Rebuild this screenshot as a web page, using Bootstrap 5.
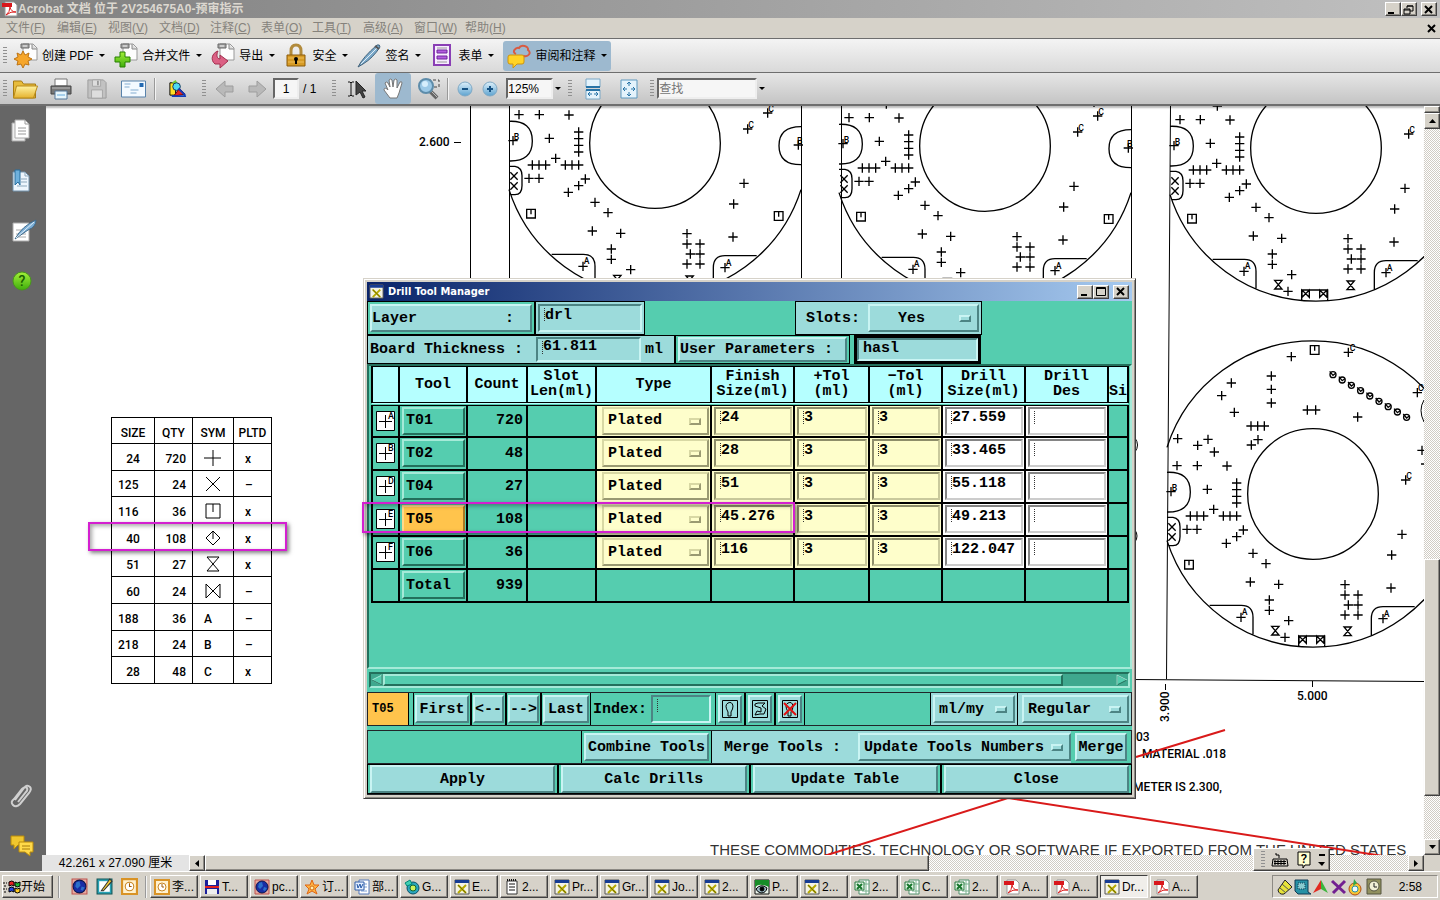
<!DOCTYPE html>
<html lang="zh-CN">
<head>
    <meta charset="UTF-8">
    <meta name="viewport" content="width=device-width, initial-scale=1.0">
    <title>Acrobat 文档 位于 2V254675A0-预审指示</title>
    <link href="https://cdn.jsdelivr.net/npm/bootstrap@5.3.3/dist/css/bootstrap.min.css" rel="stylesheet">
    <style>
        body {
            font-family: "Liberation Sans", "Noto Sans CJK SC", sans-serif;
            font-size: 12px;
            line-height: 16px;
            color: #000;
            background: #d6d2c9;
        }
        button, select, input { font: inherit; color: inherit; border-radius: 0; }
        button { padding: 0; border: 0; background: none; white-space: nowrap; }
        svg { display: block; flex: none; }
        svg text { font-family: Roboto, "Liberation Sans", sans-serif; font-weight: 500; }

        /* Windows chrome */
        .raised {
            background: #d6d2c9;
            border: 1px solid;
            border-color: #fff #404040 #404040 #fff;
            box-shadow: inset -1px -1px #8d8a84;
        }
        .app-title {
            height: 18px;
            padding: 0 3px 0 2px;
            background: linear-gradient(90deg, #808080, #c0c0c0);
            color: #dcd8d0;
            font-weight: bold;
        }
        .win-btn { width: 16px; height: 14px; }
        .app-menu { height: 20px; padding-left: 6px; color: #85827c; background: #d6d2c9; }
        .app-menu a { color: inherit; text-decoration: none; width: 51px; }
        .tools-top {
            height: 34px;
            border-top: 1px solid #6e6e6e;
            background: linear-gradient(#f4f4f4, #d9d9d9);
        }
        .tools-bottom {
            height: 34px;
            border-top: 1px solid #6e6e6e;
            border-bottom: 2px solid #6e6e6e;
            background: linear-gradient(#e6e6e6, #c4c4c4);
        }
        .tool-btn { margin-right: 9px; gap: 4px; height: 30px; }
        .tool-btn.on, .pic-btn.on { background: #9db9cf; border-radius: 3px; }
        .tool-btn.on { padding: 0 4px; }
        .pic-btn { width: 36px; height: 31px; display: flex; align-items: center; justify-content: center; }
        .pic-btn.slim { width: 32px; }
        .pic-btn.tiny { width: 25px; }
        .caret-dn { border: 3px solid transparent; border-top-color: #000; border-bottom: 0; width: 6px; margin-left: 2px; }
        .grip {
            width: 4px; height: 19px; margin: 0 3px;
            background: radial-gradient(circle, #909090 1px, transparent 1px) 0 0 / 2px 3px;
        }
        .v-line { width: 2px; height: 22px; margin: 0 3px; border-left: 1px solid #999; border-right: 1px solid #f3f3f3; }
        .sunk { background: #f6f6f6; border: 2px solid; border-color: #666 #eee #eee #666; height: 21px; padding: 0; }
        .side-bar { width: 46px; background: #666; }
        .side-bar button { height: 50px; width: 44px; display: flex; align-items: center; justify-content: center; }
        .doc-view { background: #fff; box-shadow: inset 0 3px 2px -1px #bbb; min-width: 0; }
        .scroll-track { background: repeating-conic-gradient(#fff 0 25%, #d0ccc4 0 50%) 0 0 / 2px 2px; }
        .scroll-v { width: 16px; }
        .scroll-h { height: 16px; }
        .sq { width: 16px; height: 16px; display: flex; align-items: center; justify-content: center; flex: none; }

        /* Drill legend on the sheet */
        .legend-table {
            position: absolute; left: 65px; top: 311px; width: 161px; height: 267px;
            border-collapse: collapse; table-layout: fixed;
            font-family: Roboto, "Liberation Sans", sans-serif;
            font-size: 12px; font-weight: 500; line-height: 14px;
        }
        .legend-table th, .legend-table td { border: 1px solid #000; padding: 4px 6px 0; height: 26px; }
        .legend-table th { padding: 4px 0 0; text-align: center; font-weight: 500; }
        .legend-table td:nth-child(2) { text-align: right; }
        .legend-table td:nth-child(3) { padding-left: 11px; }
        .legend-table td:nth-child(4) { padding-left: 11px; }
        .legend-table svg { margin: -4px 0 -2px; }
        .mark-box { position: absolute; border: 2px solid #d41fd0; box-shadow: 2px 2px 4px rgba(0, 0, 0, .5), inset 2px 2px 4px rgba(0, 0, 0, .35); pointer-events: none; }
        .mark-sheet { left: 42px; top: 416px; width: 199px; height: 29px; }
        .mark-row { left: -2px; top: 223px; width: 433px; height: 31px; }

        /* Drill Tool Manager */
        .drill-win {
            position: absolute; left: 363px; top: 278px; width: 773px;
            background: #d6d2c9; border: 1px solid; border-color: #d6d2c9 #404040 #404040 #d6d2c9;
            box-shadow: inset 1px 1px #fff, inset -1px -1px #8d8a84;
            padding: 3px;
        }
        .drill-title { height: 19px; padding: 0 3px 0 2px; background: linear-gradient(90deg, #0a246a, #a6caf0); color: #fff; font-size: 11px; font-weight: bold; font-family: "DejaVu Sans Condensed", "Liberation Sans", sans-serif; }
        .drill-body, .drill-body button, .drill-body select, .drill-body input {
            font-family: "Liberation Mono", "DejaVu Sans Mono", monospace;
            font-size: 15px; line-height: 15px; font-weight: bold;
        }
        .drill-body { background: #55cdaf; white-space: nowrap; }
        .m-box { border: 1px solid #000; padding: 2px; display: flex; align-items: center; }
        .m-box.snug { padding: 2px 1px; }
        .blue { background: #9cdbdb; }
        .m-btn { border: 2px solid; border-color: #c9f4f3 #4c8484 #4c8484 #c9f4f3; background: #9cdbdb; height: 28px; }
        .m-btn.green { background: #55cdaf; border-color: #a5ead8 #23705c #23705c #a5ead8; }
        .m-btn.hot { background: #ffc44c; border-color: #ffd98b #a87a24 #a87a24 #ffd98b; }
        .m-input {
            border: 2px solid; border-color: #4c8484 #c9f4f3 #c9f4f3 #4c8484; height: 28px; width: 100%;
            padding: 0 0 6px 5px; display: block; min-width: 0;
            background: repeating-linear-gradient(#333 0 1px, transparent 1px 2px) 4px 2px / 1px 14px no-repeat #9cdbdb;
        }
        .m-pick { position: relative; }
        .m-pick select { appearance: none; width: 100%; height: 28px; padding: 0 0 0 4px; border: 2px solid; border-color: #c9f4f3 #4c8484 #4c8484 #c9f4f3; background: #9cdbdb; }
        .m-pick::after {
            content: ""; position: absolute; right: 8px; top: 11px; width: 12px; height: 7px;
            border: 2px solid; border-color: #c9f4f3 #4c8484 #4c8484 #c9f4f3; pointer-events: none;
        }
        .yellow .m-pick select, .yellow .m-pick::after { background: #fefecb; border-color: #d8d8a4 #9a9a72 #9a9a72 #d8d8a4; }
        .m-pick.yes-pick select { padding-left: 28px; }
        .yellow .m-input { background-color: #fefecb; border-color: #8e8e6a #c9c99c #c9c99c #8e8e6a; }
        .white .m-input { background-color: #fff; border-color: #858585 #ccc #ccc #858585; }
        .grid-frame { border: 2px solid; border-color: #23705c #a5ead8 #a5ead8 #23705c; padding: 0 1px 0 2px; height: 305px; overflow: hidden; }
        .drill-grid { width: 100%; table-layout: fixed; border-collapse: collapse; }
        .drill-grid th { background: #b5ffff; border: 2px solid #000; border-top-width: 1px; border-bottom: 4px double #000; height: 37px; padding: 0; text-align: center; }
        .drill-grid td { border: 2px solid #000; height: 33px; padding: 1px 1px 1px 2px; overflow: hidden; }
        .drill-grid td.num { text-align: right; padding-right: 3px; }
        .drill-grid .m-btn { width: 100%; text-align: left; padding-left: 2px; }
        .drill-grid .yellow { background: #fefecb; }
        .drill-grid .pick-cell { padding-left: 5px; }
        .drill-grid .white { background: #fff; }
        .drill-grid .sym-cell { padding: 0 0 0 3px; }
        .m-scroll { height: 16px; margin: 3px 2px 0; background: #3fa88e; border: 2px solid; border-color: #23705c #a5ead8 #a5ead8 #23705c; }
        .m-thumb { width: 680px; height: 12px; background: #55cdaf; border: 2px solid; border-color: #a5ead8 #23705c #23705c #a5ead8; }

        /* Task bar */
        .task-bar { height: 29px; background: #d6d2c9; border-top: 1px solid #fff; padding: 3px 2px 2px; }
        .task-btn { width: 48px; height: 23px; margin-right: 2px; gap: 2px; padding-left: 3px; display: flex; align-items: center; overflow: hidden; flex: none; }
        .task-btn.on { border-color: #404040 #fff #fff #404040; background: #f0eeea; box-shadow: none; }
        .start-btn { width: 51px; }
        .tray { border: 1px solid; border-color: #8d8a84 #fff #fff #8d8a84; height: 23px; width: 166px; padding: 0 15px 0 3px; }
        .lang-bar { position: absolute; right: 110px; bottom: 29px; width: 77px; height: 23px; z-index: 3; }
    </style>
</head>
<body class="vh-100 d-flex flex-column overflow-hidden position-relative">

    <!-- Shared icons -->
    <svg width="0" height="0" class="position-absolute">
        <defs>
            <linearGradient id="gold" x2="0" y2="1"><stop stop-color="#fff3a0"/><stop offset="1" stop-color="#e5b22e"/></linearGradient>
            <linearGradient id="sky" x2="0" y2="1"><stop stop-color="#dff1fb"/><stop offset="1" stop-color="#5ca2cf"/></linearGradient>
            <linearGradient id="lime" x2="0" y2="1"><stop stop-color="#a3ef3a"/><stop offset="1" stop-color="#3fae0c"/></linearGradient>
            <g id="sheet"><path d="M9 1h10l4 4v12H9z" fill="#fdfdfd" stroke="#999"/><path d="M7 1h8v4H7z" fill="#aaa" stroke="#666"/><path d="M9 3h4" stroke="#eee"/><path d="M18 1v5h5" fill="#ddd" stroke="#888"/></g>
            <symbol id="i-create" viewBox="0 0 24 26"><use href="#sheet"/><path d="M9 8l2 4 4-2-1 4 4 2-4 2 1 4-4-1-2 4-2-4-4 1 1-4-4-2 4-2-1-4 4 2z" fill="#f6a62b" stroke="#bd7415"/></symbol>
            <symbol id="i-merge" viewBox="0 0 24 26"><use href="#sheet"/><path d="M6 9h5v5h5v5h-5v5H6v-5H1v-5h5z" fill="url(#lime)" stroke="#278000"/></symbol>
            <symbol id="i-export" viewBox="0 0 24 26"><use href="#sheet"/><path d="M7 8c-6 2-8 9-3 13h5v4l8-7-8-6v4c-3 0-4-4-2-8z" fill="#db6084" stroke="#a2304f"/></symbol>
            <symbol id="i-lock" viewBox="0 0 24 26"><path d="M7 13V8q0-6 5-6t5 6v5" fill="none" stroke="#b28b3c" stroke-width="3"/><path d="M3 12h18v11H3z" fill="#d79b25" stroke="#8b5b0b"/><path d="M4 15h16M4 19h16" stroke="#eebd58"/><circle cx="12" cy="16" r="2"/><path d="M12 16v5" stroke="#000" stroke-width="2"/></symbol>
            <symbol id="i-pen" viewBox="0 0 24 26"><path d="M1 24Q6 14 20 2q3-1 3 2Q16 15 6 21z" fill="#7ba9ca" stroke="#42627a"/><path d="M4 21L20 5" stroke="#e2eef6"/><path d="M18 3l4 3" stroke="#555" stroke-width="2"/></symbol>
            <symbol id="i-form" viewBox="0 0 24 26"><path d="M4 2h16v20H4z" fill="#f7ecff" stroke="#8a3fb5" stroke-width="2"/><path d="M7 7h10v3H7zm0 6h10v3H7z" fill="#b45ce0" stroke="#6e269a"/><path d="M7 5h10M7 19h10" stroke="#999"/></symbol>
            <symbol id="i-review" viewBox="0 0 24 26"><path d="M9 11c-5-2 0-7 3-6 2-4 10-2 9 2 4 3 0 7-4 6l-3 4" fill="none" stroke="#d95a41" stroke-width="2"/><path d="M3 12h12q2 0 2 2v5q0 2-2 2h-5l-4 4v-4H3q-2 0-2-2v-5q0-2 2-2z" fill="#ffd326" stroke="#cf940d"/></symbol>
            <symbol id="i-folder" viewBox="0 0 26 22"><path d="M1 20V3h8l2 3h12v14z" fill="#e7bc3c" stroke="#a67b13"/><path d="M4 8h21l-4 12H1z" fill="url(#gold)" stroke="#b98a1a"/></symbol>
            <symbol id="i-print" viewBox="0 0 24 22"><path d="M6 1h12v7H6z" fill="#fff" stroke="#777"/><path d="M2 8h20v8H2z" fill="#777" stroke="#444"/><path d="M3 10h18" stroke="#bbb"/><path d="M6 13h12v8H6z" fill="#e7f5fb" stroke="#579"/><path d="M8 17h8" stroke="#6ad"/></symbol>
            <symbol id="i-save" viewBox="0 0 22 22"><path d="M1 1h17l3 3v17H1z" fill="#c2c2c2" stroke="#999"/><path d="M6 1h9v7H6zM5 12h12v9H5z" fill="#ddd" stroke="#a5a5a5"/><path d="M12 2v5" stroke="#999" stroke-width="2"/></symbol>
            <symbol id="i-mail" viewBox="0 0 26 20"><path d="M1 2h24v16H1z" fill="#f4faff" stroke="#5882ab"/><path d="M19 4h4v4h-4z" fill="#246ab2"/><path d="M4 5h6M4 8h5M10 11h8M10 14h6" stroke="#83acd0"/></symbol>
            <symbol id="i-shapes" viewBox="0 0 20 20"><path d="M2 4h6v13H2z" fill="#ffdf25" stroke="#000"/><path d="M4 4l4-3 3 5" fill="#7c3"/><circle cx="9" cy="8" r="4" fill="#50d9f0" stroke="#135"/><path d="M6 18l6-8 6 6z" fill="#e52320" stroke="#600"/><path d="M11 10l7 7M4 18h15" stroke="#123dba" stroke-width="2"/></symbol>
            <symbol id="i-left" viewBox="0 0 20 20"><path d="M1 10l9-8v5h8v6h-8v5z" fill="#b9b9b9" stroke="#9d9d9d"/></symbol>
            <symbol id="i-right" viewBox="0 0 20 20"><path d="M19 10l-9-8v5H2v6h8v5z" fill="#b9b9b9" stroke="#9d9d9d"/></symbol>
            <symbol id="i-select" viewBox="0 0 20 20"><path d="M1 3h2l1 1 1-1h2M4 4v12M1 17h2l1-1 1 1h2" fill="none" stroke="#111"/><path d="M9 2v14l4-3 3 6 2-1-3-6h4z" fill="#444" stroke="#222"/></symbol>
            <symbol id="i-hand" viewBox="0 0 22 22"><path d="M8 20l-6-8q0-3 3-1l1 1-3-7q1-2 3 0l2 4-1-7q2-2 3 0l1 7 1-7q2-2 3 0v8l3-6q2-1 2 1l-3 10-2 5z" fill="#fff" stroke="#777"/></symbol>
            <symbol id="i-zoom" viewBox="0 0 24 24"><path d="M11 3h11v7H11z" fill="none" stroke="#444" stroke-dasharray="3 2"/><path d="M13 14l7 7" stroke="#666" stroke-width="4"/><path d="M14 14l6 6" stroke="#bbb"/><circle cx="9" cy="9" r="7" fill="#9cc9e7" stroke="#5d8caa" stroke-width="2"/><circle cx="8" cy="7" r="3" fill="#d6eefc"/></symbol>
            <symbol id="i-minus" viewBox="0 0 16 16"><circle cx="8" cy="8" r="7" fill="url(#sky)" stroke="#7fa9c5"/><path d="M5 8h6" stroke="#175384" stroke-width="2"/></symbol>
            <symbol id="i-plus" viewBox="0 0 16 16"><circle cx="8" cy="8" r="7" fill="url(#sky)" stroke="#7fa9c5"/><path d="M5 8h6M8 5v6" stroke="#175384" stroke-width="2"/></symbol>
            <symbol id="i-fitw" viewBox="0 0 18 22"><path d="M2 1h14v8H2zM2 12h14v9H2z" fill="#e4f3fc" stroke="#7ba8c6"/><path d="M2 9h14M2 12h14" stroke="#2874a7" stroke-width="2"/><path d="M4 16h4m2 0h4M6 14l-2 2 2 2m6-4l2 2-2 2" fill="none" stroke="#2874a7"/></symbol>
            <symbol id="i-fitp" viewBox="0 0 18 22"><path d="M1 2h16v18H1z" fill="#e4f3fc" stroke="#5f99bf"/><path d="M9 4v4m0 6v4M3 11h4m4 0h4M7 6l2-2 2 2M7 16l2 2 2-2M5 9l-2 2 2 2m8-4l2 2-2 2" fill="none" stroke="#2874a7"/></symbol>
            <symbol id="s-pages" viewBox="0 0 22 24"><path d="M1 4h13v18H1z" fill="#eee" stroke="#aaa"/><path d="M4 1h10l4 4v14H4z" fill="#fff" stroke="#aaa"/><path d="M14 1v4h4M7 9h8M7 12h8M7 15h8" fill="none" stroke="#999"/></symbol>
            <symbol id="s-marks" viewBox="0 0 22 24"><path d="M2 3h12l4 4v15H2z" fill="#eef6fd" stroke="#7393ad"/><path d="M14 3v4h4M10 10h6M10 13h6M6 17h10" fill="none" stroke="#8ba7bb"/><path d="M4 1h5v15l-2-3-3 3z" fill="#6eb0dc" stroke="#286e9e"/></symbol>
            <symbol id="s-sign" viewBox="0 0 26 24"><path d="M2 4h16v18H2z" fill="#fff" stroke="#aaa"/><path d="M5 11h8M5 15h10M5 18h10" stroke="#aaa"/><path d="M4 20Q11 7 25 1q0 7-8 10z" fill="#7dafd6" stroke="#406b8c"/><path d="M5 19L23 3" stroke="#e2f0fa"/></symbol>
            <symbol id="s-clip" viewBox="0 0 24 26"><path d="M5 17L14 5q3-4 6-1 2 2-1 6l-9 11q-4 4-7 1t1-6l8-10q3-3 5-1 1 2-1 4l-8 10" fill="none" stroke="#d0d0d0" stroke-width="2"/></symbol>
            <symbol id="s-notes" viewBox="0 0 26 24"><path d="M2 2h13v9H9l-4 4v-4H2z" fill="#f0c62e" stroke="#b88a0a"/><path d="M10 8h14v10h-3v4l-5-4h-6z" fill="#ffd94a" stroke="#b88a0a"/><path d="M13 12h8M13 15h8" stroke="#a57b0a"/></symbol>
            <symbol id="t-x" viewBox="0 0 16 16"><path d="M1 1h14v14H1z" fill="#f4f3e5" stroke="#555"/><path d="M1 1h14v3H1z" fill="#173c93"/><path d="M4 6l8 8M12 6l-8 8" stroke="#b5a900" stroke-width="2"/><path d="M4 6l8 8" stroke="#777000"/></symbol>
            <symbol id="t-globe" viewBox="0 0 16 16"><path d="M1 1h14v14H1z" fill="#e9aaa0" stroke="#bd5550"/><circle cx="8" cy="8" r="6" fill="#182da5" stroke="#0b164d"/><path d="M5 4l3-1 1 4-3 3-2-2zM10 8l3 1-2 3-2-1z" fill="#2b6fc9"/></symbol>
            <symbol id="t-edit" viewBox="0 0 16 16"><path d="M1 1h14v14H1z" fill="#27a2b5" stroke="#155"/><path d="M3 3h10v10H3z" fill="#fff"/><path d="M5 12l8-11 2 2-8 9z" fill="#f5cc35" stroke="#333"/></symbol>
            <symbol id="t-clock" viewBox="0 0 16 16"><path d="M1 1h14v14H1z" fill="#fff1cf" stroke="#d99326" stroke-width="2"/><circle cx="8" cy="8" r="4" fill="#fff" stroke="#c98624"/><path d="M8 5v3h2" fill="none" stroke="#a05d0a"/></symbol>
            <symbol id="t-disk" viewBox="0 0 16 16"><path d="M1 1h14v14H1z" fill="#1b1f9b"/><path d="M4 1h8v5H4z" fill="#fff"/><path d="M1 7h14v2H1z" fill="#e02020"/><path d="M3 10h10v5H3z" fill="#eee"/></symbol>
            <symbol id="t-star" viewBox="0 0 16 16"><path d="M8 1l2 5h5l-4 4 2 5-5-3-5 3 2-5-4-4h5z" fill="#ffb443" stroke="#e06612"/><circle cx="8" cy="9" r="2" fill="#fff0b0" stroke="#d66914"/></symbol>
            <symbol id="t-word" viewBox="0 0 16 16"><path d="M5 1h10v14H5z" fill="#fff" stroke="#5479ba"/><path d="M10 5h3M10 8h3M7 12h6" stroke="#7da0d5"/><path d="M1 3h9v8H1z" fill="#e5efff" stroke="#315ea9"/><path d="M3 5l1 4 2-4 1 4 2-4" fill="none" stroke="#2155a5"/></symbol>
            <symbol id="t-cam" viewBox="0 0 16 16"><circle cx="9" cy="9" r="6" fill="#29a6bd" stroke="#094f66"/><circle cx="9" cy="9" r="3" fill="#cff25b" stroke="#163"/><path d="M1 4l5-3 2 4-5 2z" fill="#3fd0b3" stroke="#087"/></symbol>
            <symbol id="t-note" viewBox="0 0 16 16"><path d="M3 2h10v13H3z" fill="#fff" stroke="#333"/><path d="M5 5h6M5 8h6M5 11h6" stroke="#111"/><path d="M3 1h10" stroke="#111" stroke-width="2" stroke-dasharray="1 1"/></symbol>
            <symbol id="t-eye" viewBox="0 0 16 16"><path d="M1 1h14v14H1z" fill="#e9f3ea" stroke="#111"/><path d="M1 9Q4 3 15 8V1H1z" fill="#188d28"/><path d="M2 10q5-6 11-1-1 5-6 5-4-1-5-4z" fill="#9cb9c4" stroke="#000"/><circle cx="8" cy="10" r="2" stroke="#000"/></symbol>
            <symbol id="t-excel" viewBox="0 0 16 16"><path d="M5 1h10v14H5z" fill="#fff" stroke="#50906d"/><path d="M10 5h5M8 12h7M12 1v14" stroke="#78b38f"/><path d="M1 3h9v8H1z" fill="#e3f5e7" stroke="#267b3e"/><path d="M3 5l5 5M8 5l-5 5" stroke="#16752b" stroke-width="2"/></symbol>
            <symbol id="t-pdf" viewBox="0 0 16 16"><path d="M3 1h9l3 3v11H3z" fill="#fff" stroke="#999"/><path d="M0 2h10v4H0z" fill="#d8171c"/><path d="M4 14q4-3 4-8 1 5 6 5-5-1-10 3z" fill="none" stroke="#dc2020"/></symbol>
            <symbol id="t-flag" viewBox="0 0 18 16"><path d="M6 3q3-2 5 0v4q-2-2-5 0z" fill="#e22" stroke="#000"/><path d="M12 3q2 2 5 0v4q-3 2-5 0z" fill="#2b3" stroke="#000"/><path d="M6 9q3-2 5 0v4q-2-2-5 0z" fill="#24d" stroke="#000"/><path d="M12 9q2 2 5 0v4q-3 2-5 0z" fill="#fc2" stroke="#000"/><path d="M0 4h4M1 7h3M0 10h4M1 13h3" stroke="#000" stroke-dasharray="2 1"/></symbol>
        </defs>
    </svg>

    <header>
        <div class="app-title d-flex align-items-center">
            <svg width="16" height="16"><use href="#t-pdf"/></svg>
            <span class="me-auto">Acrobat 文档 位于 2V254675A0-预审指示</span>
            <button class="win-btn raised" aria-label="最小化"><svg width="12" height="11"><path d="M2 9h6" stroke="#000" stroke-width="2"/></svg></button>
            <button class="win-btn raised" aria-label="还原"><svg width="12" height="11"><path d="M5 4V2h6v5H8M2 5h6v5H2zM2 6h6M5 2h6" fill="none" stroke="#000"/></svg></button>
            <button class="win-btn raised ms-1" aria-label="关闭"><svg width="12" height="11"><path d="M3 2l7 7M10 2L3 9" stroke="#000" stroke-width="2"/></svg></button>
        </div>
        <nav class="app-menu d-flex align-items-center" id="app-menu"></nav>
        <div class="tools-top d-flex align-items-center" id="tools-top">
            <span class="grip"></span>
        </div>
        <div class="tools-bottom d-flex align-items-center">
            <span class="grip me-0"></span>
            <button class="pic-btn" aria-label="打开"><svg width="27" height="22"><use href="#i-folder"/></svg></button>
            <button class="pic-btn" aria-label="打印"><svg width="24" height="22"><use href="#i-print"/></svg></button>
            <button class="pic-btn" aria-label="保存"><svg width="22" height="20"><use href="#i-save"/></svg></button>
            <button class="pic-btn" aria-label="电子邮件"><svg width="27" height="20"><use href="#i-mail"/></svg></button>
            <span class="v-line"></span>
            <button class="pic-btn me-1" aria-label="图形"><svg width="19" height="19"><use href="#i-shapes"/></svg></button>
            <span class="grip"></span>
            <button class="pic-btn slim" aria-label="上一页"><svg width="20" height="20"><use href="#i-left"/></svg></button>
            <button class="pic-btn slim" aria-label="下一页"><svg width="20" height="20"><use href="#i-right"/></svg></button>
            <input class="sunk text-center" style="width: 26px" value="1" aria-label="页码">
            <span class="ms-1 me-3">/ 1</span>
            <span class="grip ms-0"></span>
            <button class="pic-btn" aria-label="选择"><svg width="20" height="20"><use href="#i-select"/></svg></button>
            <button class="pic-btn on" aria-label="手形"><svg width="22" height="22"><use href="#i-hand"/></svg></button>
            <button class="pic-btn" aria-label="缩放"><svg width="24" height="24"><use href="#i-zoom"/></svg></button>
            <span class="v-line ms-0"></span>
            <button class="pic-btn tiny" aria-label="缩小"><svg width="16" height="16"><use href="#i-minus"/></svg></button>
            <button class="pic-btn tiny" aria-label="放大"><svg width="16" height="16"><use href="#i-plus"/></svg></button>
            <input class="sunk ms-1" style="width: 47px" value="125%" aria-label="缩放比例">
            <button aria-label="缩放列表"><span class="caret-dn d-block me-1"></span></button>
            <span class="grip"></span>
            <button class="pic-btn" aria-label="适合宽度"><svg width="18" height="22"><use href="#i-fitw"/></svg></button>
            <button class="pic-btn" aria-label="适合页面"><svg width="18" height="22"><use href="#i-fitp"/></svg></button>
            <span class="grip"></span>
            <input class="sunk" style="width: 100px" placeholder="查找" aria-label="查找">
            <button aria-label="查找选项"><span class="caret-dn d-block"></span></button>
        </div>
    </header>

    <main class="flex-grow-1 d-flex" style="min-height: 0">
        <aside class="side-bar d-flex flex-column flex-shrink-0">
            <button aria-label="页面"><svg width="22" height="24"><use href="#s-pages"/></svg></button>
            <button aria-label="书签"><svg width="22" height="24"><use href="#s-marks"/></svg></button>
            <button aria-label="签名"><svg width="26" height="24" class="ms-1"><use href="#s-sign"/></svg></button>
            <button aria-label="帮助"><svg width="20" height="20" viewBox="0 0 20 20"><circle cx="10" cy="10" r="9" fill="url(#lime)" stroke="#49961c"/><text x="10" y="15" text-anchor="middle" font-size="14" fill="#165c00">?</text></svg></button>
            <button class="mt-auto" aria-label="附件"><svg width="24" height="26"><use href="#s-clip"/></svg></button>
            <button aria-label="注释"><svg width="26" height="24"><use href="#s-notes"/></svg></button>
        </aside>
        <div class="flex-grow-1 d-flex flex-column" style="min-width: 0">
            <div class="flex-grow-1 d-flex" style="min-height: 0">
                <section class="doc-view flex-grow-1 position-relative overflow-hidden">
                    <svg id="sheet-svg" class="w-100 h-100" viewBox="46 106 1378 749" preserveAspectRatio="xMinYMin slice" fill="none" stroke="#000">
                        <defs><g id="board"></g></defs>
                        <use href="#board" x="655" y="143"/>
                        <use href="#board" x="985" y="146"/>
                        <use href="#board" x="1316" y="148"/>
                        <use href="#board" x="1313" y="494"/>
                        <path d="M470.500 106V680M509.500 106V680M801.500 106V680M841.500 106V680M1131.500 106V680M1170.500 106L1166.500 679M1131 679.500L1424 681.500M1312.500 681V687M1165.500 684V690M454 142.500h7"/>
                        <path d="M1424 400q-6 10 0 22M1135 438q5 7 0 14M1135 530q4 6 0 12"/>
                        <g fill="#000" stroke="none" font-size="12">
                            <text x="419" y="146">2.600</text>
                            <text x="1297" y="700">5.000</text>
                            <text transform="translate(1169 722) rotate(-90)">3.900</text>
                            <text x="1136" y="741">03</text>
                            <text x="1142" y="758">MATERIAL .018</text>
                            <text x="1133" y="791">METER IS 2.300,</text>
                        </g>
                        <text x="710" y="855" font-size="15" fill="#333" stroke="none" style="font-family: 'Liberation Sans', sans-serif; font-weight: normal">THESE COMMODITIES, TECHNOLOGY OR SOFTWARE IF EXPORTED FROM THE UNITED STATES</text>
                        <path d="M1136 757L1225 730M824 856L1008 798L1383 856" stroke="#d91a1a" stroke-width="2"/>
                    </svg>
                    <table class="legend-table">
                        <colgroup><col style="width: 43px"><col style="width: 38px"><col style="width: 41px"><col></colgroup>
                        <thead><tr><th>SIZE</th><th>QTY</th><th>SYM</th><th>PLTD</th></tr></thead>
                        <tbody id="legend-rows"></tbody>
                    </table>
                    <div class="mark-box mark-sheet"></div>
                </section>
                <div class="scroll-v scroll-track d-flex flex-column flex-shrink-0">
                    <div class="raised" style="height: 7px"></div>
                    <button class="sq raised" aria-label="向上"><svg width="7" height="4"><path d="M0 4l3.500-4L7 4z"/></svg></button>
                    <div style="flex: 431"></div>
                    <div class="raised" style="flex: 236"></div>
                    <div style="flex: 43"></div>
                    <button class="sq raised" aria-label="向下"><svg width="7" height="4"><path d="M0 0l3.500 4L7 0z"/></svg></button>
                </div>
            </div>
            <div class="d-flex scroll-h position-relative" style="margin-left: -4px">
                <span class="text-center" style="width: 147px; background: #e4e4e4">42.261 x 27.090 厘米</span>
                <div class="scroll-track flex-grow-1 d-flex">
                    <button class="sq raised" aria-label="向左"><svg width="4" height="7"><path d="M4 0L0 3.500 4 7z"/></svg></button>
                    <div class="raised" style="flex: 724"></div>
                    <div style="flex: 480"></div>
                    <button class="sq raised" aria-label="向右"><svg width="4" height="7"><path d="M0 0l4 3.500L0 7z"/></svg></button>
                </div>
                <span class="sq" style="background: #d6d2c9"></span>
            </div>
        </div>
    </main>

    <section class="drill-win">
        <div class="drill-title d-flex align-items-center">
            <svg width="15" height="15"><use href="#t-x"/></svg>
            <span class="ms-1 me-auto">Drill Tool Manager</span>
            <button class="win-btn raised" aria-label="Minimize"><svg width="12" height="11"><path d="M3 9h6" stroke="#000" stroke-width="2"/></svg></button>
            <button class="win-btn raised" aria-label="Maximize"><svg width="12" height="11"><path d="M2.500 1.500h9v8h-9zM2 2.500h10" fill="none" stroke="#000"/></svg></button>
            <button class="win-btn raised ms-1" aria-label="Close window"><svg width="12" height="11"><path d="M3 2l7 7M10 2L3 9" stroke="#000" stroke-width="2"/></svg></button>
        </div>
        <div class="drill-body">
            <div class="d-flex">
                <div class="m-box" style="width: 168px"><button class="m-btn d-flex justify-content-between align-items-center flex-grow-1 pe-3"><span>Layer</span><span>:</span></button></div>
                <div class="m-box blue" style="width: 110px"><input class="m-input" value="drl" aria-label="Layer"></div>
                <div class="m-box blue ms-auto" style="width: 187px; margin-right: 150px">
                    <label for="slots" class="px-2">Slots:</label>
                    <div class="m-pick yes-pick flex-grow-1"><select id="slots"><option>Yes</option><option>No</option></select></div>
                </div>
            </div>
            <div class="d-flex" style="height: 29px">
                <div class="m-box blue" style="width: 308px">
                    <label for="thick" style="width: 166px">Board Thickness :</label>
                    <input class="m-input" id="thick" value="61.811" style="width: 105px; height: 25px"><span class="ms-1">ml</span>
                </div>
                <div class="m-box me-1" style="width: 175px"><button class="m-btn flex-grow-1 text-start" style="height: 25px">User Parameters :</button></div>
                <div style="border: 3px solid #000; width: 127px"><input class="m-input" value="hasl" aria-label="User parameters" style="height: 23px; padding: 0 0 2px 4px; background-image: none"></div>
            </div>
            <div class="grid-frame">
                <table class="drill-grid">
                    <colgroup>
                        <col style="width: 27px"><col style="width: 68px"><col style="width: 60px"><col style="width: 69px"><col style="width: 115px"><col style="width: 83px">
                        <col style="width: 75px"><col style="width: 73px"><col style="width: 83px"><col style="width: 83px"><col>
                    </colgroup>
                    <thead>
                        <tr><th></th><th>Tool</th><th>Count</th><th>Slot<br>Len(ml)</th><th>Type</th><th>Finish<br>Size(ml)</th><th>+Tol<br>(ml)</th><th>−Tol<br>(ml)</th><th>Drill<br>Size(ml)</th><th>Drill<br>Des</th><th><br>Si</th></tr>
                    </thead>
                    <tbody id="drill-rows"></tbody>
                </table>
            </div>
            <div class="m-scroll d-flex justify-content-between">
                <svg width="12" height="12"><path d="M11 1L1 6l10 5z" fill="#55cdaf" stroke="#a5ead8"/><path d="M1 6l10 5V1" fill="none" stroke="#23705c"/></svg>
                <div class="m-thumb me-auto"></div>
                <svg width="12" height="12"><path d="M1 1l10 5-10 5z" fill="#55cdaf" stroke="#23705c"/><path d="M1 11V1l10 5" fill="none" stroke="#a5ead8"/></svg>
            </div>
            <div class="d-flex mt-1 border border-dark">
                <span class="d-flex align-items-center ps-1" style="background: #ffc44c; width: 41px; font-size: 12px; border-right: 1px solid #000">T05</span>
                <div class="m-box snug ms-1 border-top-0 border-bottom-0" style="width: 58px"><button class="m-btn w-100">First</button></div>
                <div class="m-box snug border-top-0 border-bottom-0" style="width: 35px"><button class="m-btn w-100">&lt;--</button></div>
                <div class="m-box snug border-top-0 border-bottom-0" style="width: 35px"><button class="m-btn w-100">--&gt;</button></div>
                <div class="m-box snug border-top-0 border-bottom-0" style="width: 50px"><button class="m-btn w-100">Last</button></div>
                <label for="idx" class="align-self-center" style="width: 60px; padding-left: 2px">Index:</label>
                <input class="m-input align-self-center" id="idx" style="width: 60px; background-color: #55cdaf">
                <div class="m-box ms-1 border-top-0 border-bottom-0" style="width: 30px"><button class="m-btn w-100 d-flex justify-content-center align-items-center" aria-label="Highlight"><svg width="18" height="20" viewBox="0 0 18 20" fill="none" stroke="#000"><path d="M1.500 1.500h15v17h-15z"/><path d="M7 13q-4-7 0-9t5 3q0 3-2 6v4H7z"/></svg></button></div>
                <div class="m-box border-top-0 border-bottom-0" style="width: 30px"><button class="m-btn w-100 d-flex justify-content-center align-items-center" aria-label="Repaint"><svg width="18" height="20" viewBox="0 0 18 20" fill="none" stroke="#000"><path d="M1.500 1.500h15v17h-15z"/><path d="M4 5l3-1h7l-3 3 4 3-2 5H9l-5 1 2-4 4 1V9L4 7z"/></svg></button></div>
                <div class="m-box border-top-0 border-bottom-0" style="width: 30px"><button class="m-btn w-100 d-flex justify-content-center align-items-center" aria-label="Clear highlight"><svg width="18" height="20" viewBox="0 0 18 20" fill="none" stroke="#000"><path d="M1.500 1.500h15v17h-15z"/><path d="M7 13q-4-7 0-9t5 3q0 3-2 6v4H7z"/><path d="M3 4l12 12M15 4L3 16" stroke="#e01010" stroke-width="2"/></svg></button></div>
                <div class="m-box blue ms-auto border-top-0 border-bottom-0" style="width: 88px"><div class="m-pick w-100"><select aria-label="Units"><option>ml/my</option></select></div></div>
                <div class="m-box blue border-0 ps-1" style="width: 113px"><div class="m-pick w-100"><select aria-label="Mode"><option>Regular</option></select></div></div>
            </div>
            <div class="d-flex justify-content-end mt-1 border border-dark">
                <div class="m-box border-top-0 border-bottom-0" style="width: 131px"><button class="m-btn w-100">Combine Tools</button></div>
                <div class="m-box blue border-0 p-0">
                    <label for="merge" style="width: 146px; padding-left: 12px">Merge Tools :</label>
                    <div class="m-pick" style="width: 213px"><select id="merge"><option>Update Tools Numbers</option></select></div>
                </div>
                <div class="ps-1 pe-1 d-flex align-items-center"><button class="m-btn" style="width: 52px">Merge</button></div>
            </div>
            <div class="row g-0 row-cols-4 border-bottom border-dark" id="actions"></div>
        </div>
        <div class="mark-box mark-row"></div>
    </section>

    <div class="lang-bar raised d-flex align-items-center justify-content-around ps-1">
        <span class="grip m-0"></span>
        <button aria-label="键盘"><svg width="18" height="16" viewBox="0 0 18 16" fill="none" stroke="#000"><path d="M5 1v2h3v3M2 7h14l1 7H1zM3 9.500h12M3 11.500h12" /><path d="M4 8v5M7 8v5M10 8v5M13 8v5"/></svg></button>
        <button aria-label="帮助"><svg width="16" height="18" viewBox="0 0 16 18"><path d="M2 1h12v13H9l-2 3v-3H2z" fill="#ffffd0" stroke="#000"/><text x="8" y="12" text-anchor="middle" font-size="13">?</text></svg></button>
        <button aria-label="选项"><svg width="8" height="14"><path d="M1 1h6v2H1zM0 9h7l-3 4z"/></svg></button>
    </div>

    <footer class="task-bar d-flex align-items-center flex-shrink-0" id="task-bar">
        <button class="task-btn start-btn raised gap-0 px-0"><svg width="18" height="16"><use href="#t-flag"/></svg>开始</button>
        <span class="v-line"></span>
        <button class="pic-btn tiny h-auto ms-1" aria-label="浏览器"><svg width="17" height="17"><use href="#t-globe"/></svg></button>
        <button class="pic-btn tiny h-auto" aria-label="显示桌面"><svg width="17" height="17"><use href="#t-edit"/></svg></button>
        <button class="pic-btn tiny h-auto" aria-label="Outlook"><svg width="17" height="17"><use href="#t-clock"/></svg></button>
        <span class="v-line"></span>
        <div class="d-flex me-auto" id="tasks"></div>
        <div class="tray d-flex align-items-center justify-content-between">
            <svg width="106" height="18" viewBox="0 0 106 18">
                <path d="M2 12l7-10 7 7-8 7q-5 1-6-4z" fill="#e7e33a" stroke="#222"/><path d="M6 6l7 6M4 10l6 5" stroke="#555"/>
                <path d="M19 2h13v12l3 2H22l-3-3z" fill="#2791a5" stroke="#123b54"/><path d="M22 5h7v6h-7z" fill="#88cbd0" stroke="#123b54" stroke-dasharray="1 1"/>
                <path d="M45 2L37 15l8-4z" fill="#e22a20"/><path d="M45 2v9l7 4z" fill="#3cb53c"/>
                <path d="M56 3l13 12M69 3L57 15" stroke="#722091" stroke-width="3"/>
                <circle cx="79" cy="11" r="6" fill="#f5c534" stroke="#b44d12"/><circle cx="79" cy="11" r="3" fill="#eefcff" stroke="#2593a8"/><path d="M78 1l3 4-4 3z" fill="#2fa749"/>
                <path d="M91 1h14v15H91z" fill="#92915f" stroke="#555440"/><circle cx="98" cy="8" r="5" fill="#f1efd6" stroke="#555440"/><path d="M98 5v4h3" fill="none" stroke="#222"/>
            </svg>
            <span>2:58</span>
        </div>
    </footer>

    <script>
        // Menu bar
        const menus = [["文件", "F"], ["编辑", "E"], ["视图", "V"], ["文档", "D"], ["注释", "C"], ["表单", "O"], ["工具", "T"], ["高级", "A"], ["窗口", "W"], ["帮助", "H"]];
        document.getElementById("app-menu").innerHTML = menus.map(m => `<a href="#">${m[0]}(<u>${m[1]}</u>)</a>`).join("") +
            `<button class="ms-auto me-1" aria-label="关闭文档"><svg width="9" height="9"><path d="M1 1l7 7M8 1L1 8" stroke="#000" stroke-width="2"/></svg></button>`;

        // Upper tool bar
        const tools = [["create", "创建 PDF"], ["merge", "合并文件"], ["export", "导出"], ["lock", "安全"], ["pen", "签名"], ["form", "表单"], ["review", "审阅和注释"]];
        document.getElementById("tools-top").innerHTML += `<div class="d-flex ps-1">` + tools.map(t => `
            <button class="tool-btn d-flex align-items-center ${t[0] === "review" ? "on" : ""}">
                <svg width="24" height="26"><use href="#i-${t[0]}"/></svg>${t[1]}<span class="caret-dn"></span>
            </button>`).join("") + `</div>`;

        // Legend on the sheet
        const glyphs = {
            plus: "M0 9h17M9 1v16", cross: "M2 2l14 14M16 2L2 16", square: "M2 2h14v14H2zM9 2v8",
            diamond: "M9 2l7 7-7 7-7-7zM9 2v8", hour: "M3 2h12L3 16h12z", bow: "M2 2v14L16 2v14z"
        };
        const legend = [
            ["24", "720", "plus", "x"], ["125", "24", "cross", "–"], ["116", "36", "square", "x"], ["40", "108", "diamond", "x"], ["51", "27", "hour", "x"],
            ["60", "24", "bow", "–"], ["188", "36", "A", "–"], ["218", "24", "B", "–"], ["28", "48", "C", "x"]
        ];
        document.getElementById("legend-rows").innerHTML = legend.map(r => `
            <tr><td class="${r[0].length < 3 ? "text-center" : ""}">${r[0]}</td><td>${r[1]}</td>
            <td>${glyphs[r[2]] ? `<svg width="18" height="18" fill="none" stroke="#000"><path d="${glyphs[r[2]]}"/></svg>` : r[2]}</td><td>${r[3]}</td></tr>`).join("");

        // Board drawing, three units to one sheet unit, hub at 550,342
        const holes = [
            [305,9],[276,47],[425,-12],[425,28],[425,69],[485,-70],[314,97],[364,138],[384,138],[404,138],[385,179],[365,195],[533,90],[558,90],[684,111],
            [144,176],[204,196],[235,178],[254,216],[142,257],[203,257],[292,258],[321,309],[321,329],[321,349],[321,369],[233,328],[252,388],
            [182,408],[202,408],[222,408],[281,408],[301,408],[321,408],[172,448],[202,448],[341,450],[321,470],[290,490],[370,520],[409,551],
            [362,606],[447,613],[419,660],[419,691],[477,722],[466,772],[646,614],[646,645],[656,675],[646,705],[685,645],[685,675],[685,705],
            [786,525],[817,463],[784,624],[877,211],[124,335],[980,348],[334,712],[760,716],[828,300],[888,252],[863,38],[656,-83]
        ];
        const tags = [["B",126,332],["B",976,344],["A",336,706],["A",762,710],["C",830,298],["C",890,250],["C",865,34],["C",660,-87]];
        let d = holes.map(h => `M${h[0] - 14} ${h[1]}h28M${h[0]} ${h[1] - 14}v28`).join("");
        [[555,-90],[178,554],[921,561]].forEach(s => d += `M${s[0] - 13} ${s[1] - 13}h26v26h-26zM${s[0]} ${s[1] - 12}v14`);
        [[437,752],[654,754]].forEach(s => d += `M${s[0] - 11} ${s[1] - 13}h22l-22 26h22z`);
        [[519,779],[572,779]].forEach(s => d += `M${s[0] - 11} ${s[1] - 11}v22l22 -22v22z`);
        d += "M507 798V768H585V798M240 676H335Q370 676 370 712V763M855 680H760Q725 680 725 716V766";
        d += "M112 277Q182 274 182 336T112 396M112 412H130Q151 415 151 440V470Q151 496 130 497H116M116 430l22 22m0-22l-22 22m0 8l22 22m0-22l-22 22";
        d += "M988 293Q922 293 922 350T988 407M112 202A460 460 0 0 1 988 202M112 482A460 460 0 0 0 988 482";
        let board = `<path d="${d}"/><circle cx="550" cy="342" r="196"/>`;
        for (let i = 0; i < 9; i++) {
            const x = 610 + i * 27.600, y = -16 + i * 16;
            board += `<circle cx="${x}" cy="${y}" r="9"/><path d="M${x - 10} ${y - 10}l10 12 8 -6"/>`;
        }
        board += tags.map(t => `<text x="${t[1]}" y="${t[2]}" font-size="26" fill="#000" stroke="none">${t[0]}</text>`).join("");
        document.getElementById("board").innerHTML = `<g transform="scale(.33333) translate(-550 -342)" stroke-width="4">${board}</g>`;

        // Tool table
        const drills = [
            ["A", "T01", 720, "24", "27.559"], ["B", "T02", 48, "28", "33.465"], ["D", "T04", 27, "51", "55.118"],
            ["E", "T05", 108, "45.276", "49.213"], ["F", "T06", 36, "116", "122.047"]
        ];
        const field = (value, label) => `<input class="m-input" value="${value}" aria-label="${label}">`;
        document.getElementById("drill-rows").innerHTML = drills.map(r => `
            <tr>
                <td class="sym-cell"><svg width="20" height="20" viewBox="0 0 20 20"><path d="M.500.500h18v19H.500z" fill="#fff" stroke="#000"/><path d="M3 10.500h13M9.500 4v13" stroke="#000"/><text x="12" y="8" font-size="9">${r[0]}</text></svg></td>
                <td><button class="m-btn ${r[1] === "T05" ? "hot" : "green"}">${r[1]}</button></td>
                <td class="num">${r[2]}</td><td></td>
                <td class="yellow pick-cell"><div class="m-pick"><select aria-label="${r[1]} type"><option>Plated</option></select></div></td>
                <td class="yellow">${field(r[3], "Finish size")}</td><td class="yellow">${field("3", "Plus tolerance")}</td><td class="yellow">${field("3", "Minus tolerance")}</td>
                <td class="white">${field(r[4], "Drill size")}</td><td class="white">${field("", "Drill des")}</td><td></td>
            </tr>`).join("") +
            `<tr><td></td><td><button class="m-btn green">Total</button></td><td class="num">939</td>${"<td></td>".repeat(8)}</tr>`;
        document.getElementById("actions").innerHTML = ["Apply", "Calc Drills", "Update Table", "Close"]
            .map(a => `<div class="col"><div class="m-box py-0"><button class="m-btn w-100">${a}</button></div></div>`).join("");

        // Task buttons
        const tasks = [
            ["clock", "李..."], ["disk", "T..."], ["globe", "pc..."], ["star", "订..."], ["word", "部..."], ["cam", "G..."], ["x", "E..."], ["note", "2..."],
            ["x", "Pr..."], ["x", "Gr..."], ["x", "Jo..."], ["x", "2..."], ["eye", "P..."], ["x", "2..."], ["excel", "2..."], ["excel", "C..."], ["excel", "2..."],
            ["pdf", "A..."], ["pdf", "A..."], ["x", "Dr..."], ["pdf", "A..."]
        ];
        document.getElementById("tasks").innerHTML = tasks.map(t =>
            `<button class="task-btn raised ${t[1] === "Dr..." ? "on" : ""}"><svg width="16" height="16"><use href="#t-${t[0]}"/></svg>${t[1]}</button>`).join("");
    </script>

    <script src="https://cdn.jsdelivr.net/npm/bootstrap@5.3.3/dist/js/bootstrap.bundle.min.js"></script>
</body>
</html>
